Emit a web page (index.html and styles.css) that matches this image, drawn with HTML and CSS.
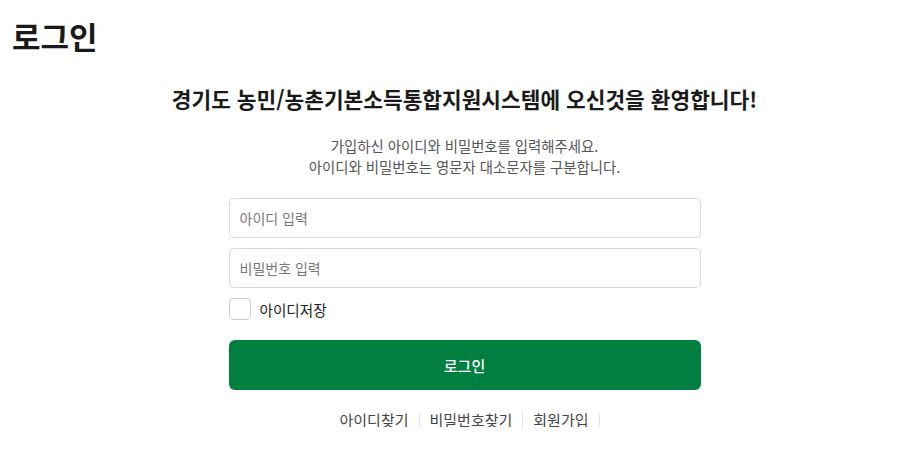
FILE: index.html
```html
<!DOCTYPE html>
<html lang="ko">
<head>
<meta charset="UTF-8">
<meta name="viewport" content="width=device-width, initial-scale=1.0">
<title>로그인</title>
<link rel="stylesheet" href="styles.css">
</head>
<body>
<h1 class="page-title">로그인</h1>

<div class="login">
  <h2 class="welcome">경기도 농민/농촌기본소득통합지원시스템에 오신것을 환영합니다!</h2>
  <p class="guide">가입하신 아이디와 비밀번호를 입력해주세요.<br>아이디와 비밀번호는 영문자 대소문자를 구분합니다.</p>

  <form class="login-form">
    <input type="text" class="field" placeholder="아이디 입력">
    <input type="password" class="field" placeholder="비밀번호 입력">
    <label class="save-id">
      <span class="box"></span>
      아이디저장
    </label>
    <button type="button" class="btn-login">로그인</button>
  </form>

  <ul class="links">
    <li><a href="#">아이디찾기</a></li>
    <li><a href="#">비밀번호찾기</a></li>
    <li><a href="#">회원가입</a></li>
  </ul>
</div>
</body>
</html>
```

FILE: styles.css
```css
body {
  margin: 0;
  background: #fff;
  color: #222;
  font-family: "Noto Sans CJK KR", "Noto Sans", sans-serif;
}

.page-title {
  margin: 0;
  padding: 16px 0 0 12px;
  font-size: 31px;
  line-height: 40px;
  font-weight: 700;
  color: #1a1a1a;
}

.login {
  width: 472px;
  margin: 0 auto;
  padding-left: 22px;
  display: flex;
  flex-direction: column;
  align-items: center;
}

.welcome {
  margin: 28px -200px 0;
  font-size: 21.4px;
  line-height: 30px;
  font-weight: 700;
  color: #1a1a1a;
  white-space: nowrap;
}

.guide {
  margin: 21px 0 0;
  font-size: 14.4px;
  line-height: 21px;
  color: #555;
  text-align: center;
}

.login-form {
  width: 100%;
  margin-top: 21px;
  display: flex;
  flex-direction: column;
  gap: 10px;
}

.field {
  box-sizing: border-box;
  height: 40px;
  border: 1px solid #d9d9d9;
  border-radius: 5px;
  padding: 0 10px;
  font-family: inherit;
  font-size: 14px;
  color: #333;
}

.field::placeholder {
  color: #777;
}

.save-id {
  display: flex;
  align-items: center;
  gap: 9px;
  font-size: 14.6px;
  color: #222;
}

.save-id .box {
  width: 20px;
  height: 20px;
  border: 1px solid #ccc;
  border-radius: 4px;
}

.btn-login {
  height: 50px;
  margin-top: 10px;
  border: 0;
  border-radius: 6px;
  background: #007f41;
  color: #fff;
  font-family: inherit;
  font-size: 15px;
  font-weight: 500;
}

.links {
  list-style: none;
  margin: 23px 0 0;
  padding: 0;
  display: flex;
  font-size: 15px;
}

.links li {
  padding: 0 10px;
  border-right: 1px solid #e5e5e5;
  line-height: 14px;
}

.links a {
  color: #444;
  text-decoration: none;
}
```
